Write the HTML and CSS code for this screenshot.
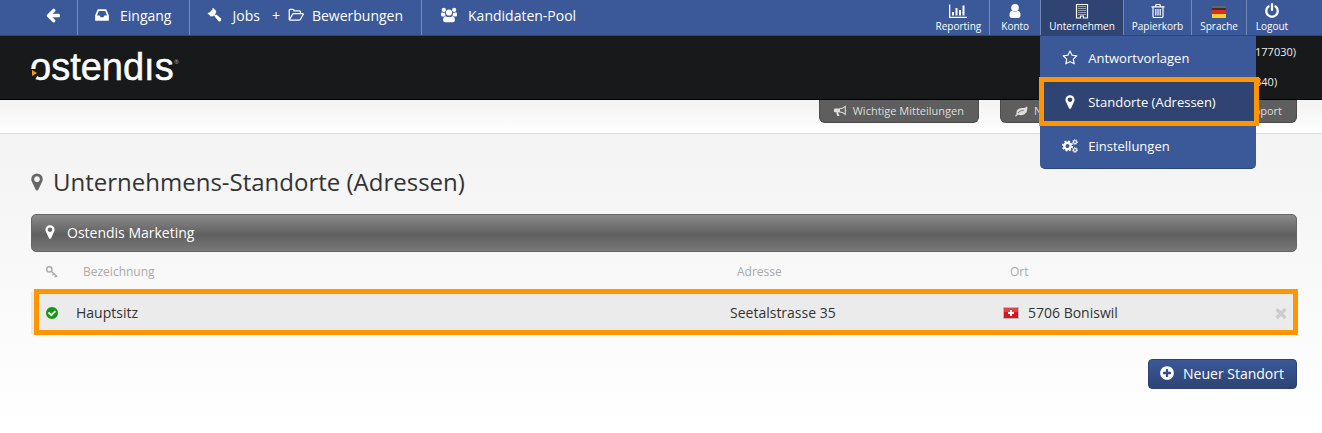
FILE: index.html
```html
<!DOCTYPE html>
<html lang="de">
<head>
  <meta charset="UTF-8">
  <title>Unternehmens-Standorte</title>
  <link rel="stylesheet" href="styles.css">
</head>
<body>

  <!-- Shared icons -->
  <svg class="sprite" width="0" height="0" aria-hidden="true">
    <symbol id="marker" viewBox="0 0 1792 1792"><path d="M1152 640q0-106-75-181t-181-75-181 75-75 181 75 181 181 75 181-75 75-181zm256 0q0 109-33 179l-364 774q-16 33-47.5 52t-67.5 19-67.5-19-46.5-52l-365-774q-33-70-33-179 0-212 150-362t362-150 362 150 150 362z"/></symbol>
  </svg>

  <nav class="topbar">
    <ul class="main-nav">
      <li class="back">
        <a href="#" aria-label="Zurück">
          <svg class="icon" viewBox="0 0 1792 1792"><path d="M1664 896v128q0 53-32.5 90.5t-84.5 37.5h-704l293 294q38 36 38 90t-38 90l-75 76q-37 37-90 37-52 0-91-37l-651-652q-37-37-37-90 0-52 37-91l651-650q38-38 91-38 52 0 90 38l75 74q38 38 38 91t-38 91l-293 293h704q52 0 84.5 37.5t32.5 90.5z"/></svg>
        </a>
      </li>
      <li>
        <a href="#">
          <svg class="icon" viewBox="0 0 1792 1792"><path d="M1151 960h316q-1-3-2.5-8t-2.5-8l-212-496h-708l-212 496q-1 2-2.5 8t-2.5 8h316l95 192h320zm513 30v482q0 26-19 45t-45 19h-1408q-26 0-45-19t-19-45v-482q0-62 25-123l238-552q10-25 36.5-42t52.5-17h832q26 0 52.5 17t36.5 42l238 552q25 61 25 123z"/></svg>
          Eingang
        </a>
      </li>
      <li>
        <a href="#">
          <svg class="icon" viewBox="0 0 16 16"><path d="M7.500 1.200l3 3-.8.9.6.6-1.500 1.500 6 5.200q.8.8 0 1.700t-1.800.1L8 8.200l-1.400 1.400-.6-.6-.9.8-3.600-3.600.8-.8.6.6L6.700 2.200l-.5-.5.6-.6q.4-.3.700.1z"/><path d="M8.600 9.200l1.800-1.800 4.300 3.800q1 .9.100 1.900l-.7.700q-1 .9-1.900-.1z"/></svg>
          Jobs
        </a>
        <a class="joined" href="#">
          <span>+</span>
          <svg class="icon" viewBox="0 0 16 16"><path class="line" d="M1.200 12.800V3.500q0-1.100 1.100-1.100h2.600q1.100 0 1.100 1.100v.4h5.400q1.100 0 1.100 1.100v1.600M1.300 13l3-5.400q.5-1 1.500-1h8.800q1 0 .5.900l-2.600 4.700q-.5 1-1.600 1H2q-.9 0-.8-.9"/></svg>
          Bewerbungen
        </a>
      </li>
      <li>
        <a href="#">
          <svg class="icon wide" viewBox="0 0 18 16"><circle cx="3.800" cy="2.900" r="2.100"/><circle cx="14.200" cy="2.900" r="2.100"/><circle cx="9" cy="5.500" r="3.100"/><path d="M1 7.200q0-1.900 1-1.900 1.200.7 2.900.5 0 1.600.9 2.800-1.200.1-2 .900H2.500Q1 9.500 1 8.200zM17 7.200q0-1.900-1-1.900-1.200.7-2.900.5 0 1.600-.9 2.800 1.200.1 2 .9h1.300q1.500 0 1.500-1.300zM3.100 13q0-3.700 2.500-3.800 3.400 1.800 6.800 0 2.500.1 2.500 3.800 0 2.200-2 2.200H5.100q-2 0-2-2.200z"/></svg>
          Kandidaten-Pool
        </a>
      </li>
    </ul>

    <ul class="tool-nav">
      <li>
        <a href="#">
          <svg class="icon wide" viewBox="0 0 18 16"><path d="M0 1.500h1.300v12.200H18V15H0zM3 9h2v3.500H3zM6.500 5h2v7.500h-2zM10 7h2v5.500h-2zM13.500 2.500h2v10h-2z"/></svg>
          Reporting
        </a>
      </li>
      <li>
        <a href="#">
          <svg class="icon" viewBox="0 0 16 16"><circle cx="8" cy="4.800" r="3.800"/><path d="M2.500 12.300q0-4.300 2.800-4.500Q8 10 10.700 7.800q2.800.2 2.800 4.500 0 2.700-2.400 2.700H4.900q-2.400 0-2.400-2.700z"/></svg>
          Konto
        </a>
      </li>
      <li class="active">
        <a href="#">
          <svg class="icon" viewBox="0 0 16 16"><path class="line" d="M2.500 1.500h11v13.500h-4v-2h-3v2h-4z"/><path class="dots" d="M4.500 3.500h7M4.500 5.500h7M4.500 7.500h7M4.500 9.500h7M4.500 11.500h7"/></svg>
          Unternehmen
        </a>
        <ul class="menu">
          <li>
            <a href="#">
              <svg class="icon" viewBox="0 0 1792 1792"><path d="M1201 1004l306-297-422-62-189-382-189 382-422 62 306 297-73 421 378-199 377 199zm527-357q0 22-26 48l-363 354 86 500q1 7 1 20 0 50-41 50-19 0-40-12l-449-236-449 236q-22 12-40 12-21 0-31.500-14.500t-10.500-35.500q0-6 2-20l86-500-364-354q-25-27-25-48 0-37 56-46l502-73 225-455q19-41 49-41t49 41l225 455 502 73q56 9 56 46z"/></svg>
              Antwortvorlagen
            </a>
          </li>
          <li class="current">
            <a href="#">
              <svg class="icon"><use href="#marker"/></svg>
              Standorte (Adressen)
            </a>
          </li>
          <li>
            <a href="#">
              <svg class="icon" viewBox="0 0 16 16"><circle class="gear" cx="5.500" cy="8" r="3.200"/><circle class="teeth" cx="5.500" cy="8" r="4.800"/><circle class="gear small" cx="13" cy="4" r="1.500"/><circle class="teeth small" cx="13" cy="4" r="2.400"/><circle class="gear small" cx="13" cy="12" r="1.500"/><circle class="teeth small" cx="13" cy="12" r="2.400"/></svg>
              Einstellungen
            </a>
          </li>
        </ul>
      </li>
      <li>
        <a href="#">
          <svg class="icon" viewBox="0 0 16 16"><path class="line" d="M1.500 3.800h13M5.500 3.500l.6-2h3.800l.6 2M3 4v9.200q0 1.300 1.200 1.300h7.600q1.200 0 1.200-1.300V4M5.800 6v6.500M8 6v6.500M10.200 6v6.500"/></svg>
          Papierkorb
        </a>
      </li>
      <li>
        <a href="#">
          <svg class="icon" viewBox="0 0 16 16"><path fill="#333" d="M1 3h14v4H1z"/><path fill="#e02a1c" d="M1 7h14v4H1z"/><path fill="#f8cf2c" d="M1 11h14v4H1z"/><path fill="#fff" opacity=".25" d="M1 3h14v2H1z"/></svg>
          Sprache
        </a>
      </li>
      <li>
        <a href="#">
          <svg class="icon" viewBox="0 0 1792 1792"><path d="M1664 896q0 156-61 298t-164 245-245 164-298 61-298-61-245-164-164-245-61-298q0-182 80.500-343t226.500-270q43-32 95.500-25t83.500 50q32 42 24.500 94.500t-49.500 84.500q-98 74-151.500 181t-53.500 228q0 104 40.500 198.500t109.500 163.500 163.500 109.500 198.500 40.500 198.500-40.500 163.500-109.500 109.500-163.500 40.500-198.500q0-121-53.500-228t-151.500-181q-42-32-49.500-84.500t24.500-94.500q31-43 84-50t95 25q146 109 226.500 270t80.500 343zm-640-768v640q0 52-38 90t-90 38-90-38-38-90v-640q0-52 38-90t90-38 90 38 38 90z"/></svg>
          Logout
        </a>
      </li>
    </ul>
  </nav>

  <header class="header">
    <a class="logo" href="#" aria-label="ostendis">
      <svg width="156" height="50" viewBox="0 0 156 50">
        <text class="logo-name" x="0" y="36">ostendıs</text>
        <text class="logo-mark" x="144" y="20">®</text>
        <path fill="#18191a" d="M0 25h8v6l-4 6H0z"/>
        <path fill="#f90" d="M2 26l5 3-5 3z"/>
      </svg>
    </a>
    <div class="account">
      <span>(177030)</span>
      <span>(340)</span>
    </div>
  </header>

  <div class="tabs">
    <a href="#">
      <svg class="icon" viewBox="0 0 16 16"><path class="line" d="M7.500 5.500q3.500 0 6.500-2.800v9.100Q11 9 7.500 9"/><path d="M2.500 5H8v4.500H6q0 2 1.500 3.500-1 1-2.800.3Q3.800 11.500 4 9.500H2.500Q1 9.500 1 8V6.500Q1 5 2.500 5zM14 6q1.200 0 1.200 1.200T14 8.400z"/></svg>
      Wichtige Mitteilungen
    </a>
    <a class="news" href="#">
      <svg class="icon" viewBox="0 0 16 16"><path d="M15 2.500q1.200 6.200-2.700 9-3.300 2.200-7.600.8L2.600 14q-1 .5-1.200-.4.200-.8 1.500-1.800-1-4.700 2.600-6.500Q7.500 4.500 11 4.700q2.500-.2 4-2.200zM4.500 10.500q2.600-2.800 6.800-3l-.2-.9Q6.500 7 4 9.900z"/></svg>
      News
    </a>
    <a class="support" href="#">Support</a>
  </div>

  <main class="content">
    <h1><svg class="icon"><use href="#marker"/></svg>Unternehmens-Standorte (Adressen)</h1>

    <h2><svg class="icon"><use href="#marker"/></svg>Ostendis Marketing</h2>

    <table class="locations">
      <thead>
        <tr>
          <th class="status" aria-label="Status">
            <svg class="icon" viewBox="0 0 16 16"><circle class="key" cx="5" cy="5" r="3"/><path class="key" d="M7.200 7.200l6.800 6.300M10 10l-1.500 1.700M12.500 12.200L11 14"/></svg>
          </th>
          <th>Bezeichnung</th>
          <th class="address">Adresse</th>
          <th class="city">Ort</th>
          <th class="action"></th>
        </tr>
      </thead>
      <tbody>
        <tr class="marked">
          <td class="status">
            <svg class="icon" viewBox="0 0 1792 1792"><path d="M1412 734q0-28-18-46l-91-90q-19-19-45-19t-45 19l-408 407-226-226q-19-19-45-19t-45 19l-91 90q-18 18-18 46 0 27 18 45l362 362q19 19 45 19 27 0 46-19l543-543q18-18 18-45zm252 162q0 209-103 385.500t-279.500 279.500-385.500 103-385.500-103-279.500-279.500-103-385.500 103-385.500 279.500-279.500 385.500-103 385.500 103 279.500 279.500 103 385.500z"/></svg>
          </td>
          <td>Hauptsitz</td>
          <td>Seetalstrasse 35</td>
          <td>
            <span class="place">
              <svg class="icon" viewBox="0 0 16 16"><path fill="#d8141c" stroke="#bbb" d="M.5 2.500h15v11H.5z"/><path fill="#fff" opacity=".2" d="M1 3h14v4H1z"/><path fill="#fff" d="M7 5h2v2h2v2H9v2H7V9H5V7h2z"/></svg>
              5706 Boniswil
            </span>
          </td>
          <td class="action">
            <button type="button" class="remove" aria-label="Löschen">
              <svg class="icon" viewBox="0 0 1792 1792"><path d="M1490 1322q0 40-28 68l-136 136q-28 28-68 28t-68-28l-294-294-294 294q-28 28-68 28t-68-28l-136-136q-28-28-28-68t28-68l294-294-294-294q-28-28-28-68t28-68l136-136q28-28 68-28t68 28l294 294 294-294q28-28 68-28t68 28l136 136q28 28 28 68t-28 68l-294 294 294 294q28 28 28 68z"/></svg>
            </button>
          </td>
        </tr>
      </tbody>
    </table>

    <button type="button" class="new-location">
      <svg class="icon" viewBox="0 0 1792 1792"><path d="M1344 960v-128q0-26-19-45t-45-19h-256v-256q0-26-19-45t-45-19h-128q-26 0-45 19t-19 45v256h-256q-26 0-45 19t-19 45v128q0 26 19 45t45 19h256v256q0 26 19 45t45 19h128q26 0 45-19t19-45v-256h256q26 0 45-19t19-45zm320-64q0 209-103 385.500t-279.500 279.500-385.500 103-385.500-103-279.500-279.500-103-385.500 103-385.500 279.500-279.500 385.500-103 385.500 103 279.500 279.500 103 385.500z"/></svg>
      Neuer Standort
    </button>
  </main>

</body>
</html>
```
FILE: styles.css
```css
* {
  box-sizing: border-box;
}

body {
  margin: 0;
  min-height: 100vh;
  display: flex;
  flex-direction: column;
  font-family: "Open Sans", sans-serif;
  font-size: 14px;
  color: #333;
}

ul {
  margin: 0;
  padding: 0;
  list-style: none;
}

a {
  color: inherit;
  text-decoration: none;
}

.sprite {
  display: none;
}

.icon {
  width: 16px;
  height: 16px;
  flex: none;
  fill: currentColor;
}

.icon.wide {
  width: 18px;
}

.line,
.dots,
.key,
.gear,
.teeth {
  fill: none;
  stroke: currentColor;
  stroke-width: 1.2;
}

.dots {
  stroke-width: 1;
  stroke-dasharray: 1 1;
}

.key {
  stroke-width: 1.6;
}

.gear {
  stroke-width: 2.4;
}

.teeth {
  stroke-width: 1.6;
  stroke-dasharray: 1.9 1.87;
}

.gear.small {
  stroke-width: 1.1;
}

.teeth.small {
  stroke-width: 1;
  stroke-dasharray: 1 .88;
}

/* Top bar */
.topbar {
  display: flex;
  justify-content: space-between;
  height: 36px;
  padding-right: 25px;
  background: #3b5998;
  border-bottom: 1px solid #2b4778;
  color: #fff;
}

.main-nav,
.tool-nav {
  display: flex;
}

.main-nav li {
  display: flex;
  padding: 0 18px 5px 16px;
  border-right: 1px solid #7389b7;
}

.main-nav li:last-child {
  padding-left: 18px;
  border-right: 0;
}

.main-nav .back {
  padding-left: 45px;
  padding-right: 16px;
}

.main-nav a {
  display: flex;
  align-items: center;
  gap: 10px;
}

.main-nav .joined {
  gap: 8px;
  margin-left: 12px;
}

.tool-nav > li {
  position: relative;
  min-width: 51px;
  border-left: 1px solid #7389b7;
}

.tool-nav > li:first-child {
  border-left: 0;
}

.tool-nav > li > a {
  display: flex;
  flex-direction: column;
  align-items: center;
  height: 35px;
  padding: 3px 8px 0;
  font-size: 10px;
  line-height: 15px;
}

.tool-nav > .active {
  background: #2f4472;
}

.menu {
  position: absolute;
  top: 36px;
  left: -1px;
  z-index: 1;
  width: 216px;
  background: #3b5998;
  border-bottom: 1px solid #2b4778;
  border-radius: 0 0 5px 5px;
  font-size: 13px;
}

.menu a {
  display: flex;
  align-items: center;
  gap: 10px;
  height: 44px;
  padding: 0 22px;
}

.menu .current {
  position: relative;
  background: #2f4472;
}

.menu .current::after {
  content: "";
  position: absolute;
  inset: -3px -3px -2px -1px;
  border: 5px solid #ff9500;
}

/* Header */
.header {
  display: flex;
  justify-content: space-between;
  height: 64px;
  padding: 0 26px 0 30px;
  background: #18191a;
  border-bottom: 1px solid #000;
  color: #eee;
}

.logo {
  padding-top: 8px;
}

.logo-name {
  font-family: "Liberation Sans", sans-serif;
  font-size: 38px;
  fill: #fff;
  stroke: #fff;
  stroke-width: .5;
}

.logo-mark {
  font-size: 6px;
  fill: #aaa;
}

.account {
  display: flex;
  flex-direction: column;
  padding-top: 1px;
  font-size: 11px;
  line-height: 30px;
}

/* Tabs below the header */
.tabs {
  display: flex;
  justify-content: flex-end;
  align-items: flex-start;
  gap: 21px;
  height: 34px;
  padding-right: 25px;
  background: linear-gradient(#f2f2f2, #fff);
  border-bottom: 1px solid #ddd;
}

.tabs a {
  display: flex;
  align-items: center;
  gap: 6px;
  height: 23px;
  padding: 0 14px 1px 13px;
  background: #5e5e5e;
  border: 1px solid #4c4c4c;
  border-top: 0;
  border-radius: 0 0 6px 6px;
  color: #ddd;
  font-size: 11px;
}

.tabs .icon {
  width: 14px;
  height: 14px;
}

.tabs .news,
.tabs .support {
  min-width: 138px;
}

.tabs .support {
  justify-content: flex-end;
}

/* Content */
.content {
  flex: 1;
  padding: 30px 25px 20px 31px;
  background: linear-gradient(#f3f3f3, #fff);
}

h1,
h2 {
  display: flex;
  align-items: center;
  margin: 0;
  font-weight: 400;
}

h1 {
  gap: 6px;
  margin-bottom: 14px;
  font-size: 24px;
  line-height: 36px;
}

h1 .icon {
  width: 20px;
  height: 20px;
  margin-left: -4px;
  color: #666;
}

h2 {
  gap: 9px;
  height: 38px;
  padding: 0 10px 2px;
  background: linear-gradient(#8a8a8a, #606060 55%, #787878);
  border: 1px solid #666;
  border-radius: 5px;
  color: #fff;
  font-size: 14px;
}

.locations {
  width: 100%;
  border-collapse: collapse;
  table-layout: fixed;
}

.locations th {
  height: 40px;
  padding: 0 14px 2px;
  color: #aaa;
  font-size: 12px;
  font-weight: 400;
  text-align: left;
}

.locations td {
  height: 42px;
  padding: 0 7px 1px;
}

.locations .icon {
  display: block;
}

.locations .status {
  width: 38px;
  padding: 0 0 0 14px;
}

.locations .status .icon {
  width: 14px;
  height: 14px;
}

td.status {
  color: #119911;
}

.address {
  width: 273px;
}

.city {
  width: 265px;
}

.locations .action {
  width: 36px;
  padding: 0 8px;
}

.marked {
  position: relative;
  background: #ebebeb;
}

/* frame is placed against the row, not the cell */
.marked .action::after {
  content: "";
  position: absolute;
  inset: -3px -1px -1px 3px;
  border: 5px solid #ff9500;
  pointer-events: none;
}

.place {
  display: flex;
  align-items: center;
  gap: 9px;
}

.remove {
  display: block;
  margin-left: auto;
  padding: 0;
  background: none;
  border: 0;
  color: #ccc;
  cursor: pointer;
}

.new-location {
  display: flex;
  align-items: center;
  gap: 8px;
  height: 30px;
  margin: 25px 0 0 auto;
  padding: 0 12px 2px 10px;
  background: linear-gradient(#3b5998, #2d4373);
  border: 1px solid #2d4373;
  border-radius: 4px;
  color: #fff;
  font-family: inherit;
  font-size: 14px;
  cursor: pointer;
}
```
